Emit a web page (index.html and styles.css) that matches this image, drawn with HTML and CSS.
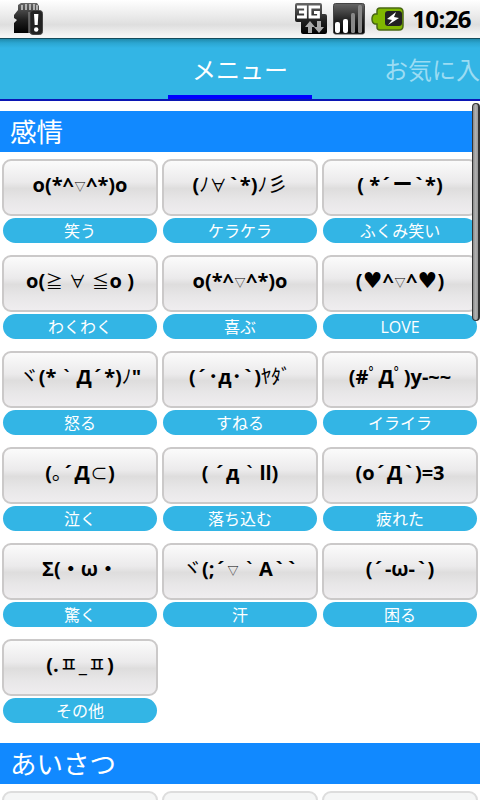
FILE: index.html
```html
<!DOCTYPE html>
<html lang="ja">
<head>
<meta charset="utf-8">
<title>メニュー</title>
<link rel="stylesheet" href="styles.css">
</head>
<body>
<div class="screen">
<header class="status">
<svg class="sd" width="30" height="33" viewBox="0 0 30 33"><defs><linearGradient id="g" x2="0" y2="1"><stop stop-color="#666"/><stop offset=".55" stop-color="#222"/><stop offset="1" stop-color="#000"/></linearGradient></defs><path d="M7 0h16l2 3v27H0V20l3-3-3-2v-3l4-5V2z" fill="url(#g)"/><path d="M8 2v5M12 1v6M16 1v6M20 1v6M23 2v5" stroke="#bbb" stroke-width="1.800"/><rect x="16" y="7.500" width="12.500" height="24" rx="3" fill="#222" stroke="#444"/><path d="M15 9v21" stroke="#999"/><path d="M20 11h4.400l-.7 11h-3z" fill="#fff"/><circle cx="22.200" cy="26.500" r="2.200" fill="#fff"/></svg>
<svg class="net" width="32" height="32" viewBox="0 0 32 32"><path d="M2 0h23q2 0 2 2v9h3q2 0 2 2v16q0 2-2 2H8q-2 0-2-2V19H2q-2 0-2-2V2q0-2 2-2z" fill="url(#g)"/><path d="M2 4h8.500v10H2M4 9h6M25 4H15v10h8.500V9.500H19" fill="none" stroke="#fff" stroke-width="2.800"/><path d="m15 18 5 6h-3v6h-4v-6h-3zM22 18h4v6h3l-5 6-5-6h3z" fill="#aaa"/></svg>
<svg class="signal" width="32" height="32" viewBox="0 0 32 32"><rect x=".5" y=".5" width="31" height="30.500" rx="2" fill="url(#g)" stroke="#444"/><g fill="#fff"><rect x="2" y="19" width="5" height="11" rx="2"/><rect x="10" y="16" width="5" height="14" rx="2"/></g><g fill="#888"><rect x="18" y="10" width="4" height="20" rx="1.500"/><rect x="25" y="2" width="4" height="28" rx="1.500"/></g></svg>
<svg class="battery" width="33" height="24" viewBox="0 0 33 24"><path d="M9 1h19q4 0 4 4v14q0 4-4 4H9q-3 0-3-3v-3H4q-3-1-3-5t3-5h2V4q0-3 3-3z" fill="#80b800" stroke="#496813" stroke-width="1.500"/><path d="M17 4h11q3 0 3 3v9q0 3-3 3H17q-3 0-3-3V7q0-3 3-3z" fill="#222"/><path d="m25 5-9 7 5 1-4 5 11-7-5-1z" fill="#fff"/></svg>
<span class="clock">10:26</span>
</header>
<nav class="tabs"><span class="tab-gap"></span><span class="tab current">メニュー</span><span class="tab next">お気に入</span></nav>
<main class="content">
<h2 class="heading">感情</h2>
<section class="grid">
<div class="cell"><div class="face"><span>o(*^<i class="tri">▽</i>^*)o</span></div><div class="label">笑う</div></div>
<div class="cell"><div class="face"><span>(<i class="half">ﾉ</i><i class="math">∀</i><u>`</u>*)<i class="half">ﾉ</i><i>彡</i></span></div><div class="label">ケラケラ</div></div>
<div class="cell"><div class="face"><span>( *<u>´</u><b>ー</b><u>`</u>*)</span></div><div class="label">ふくみ笑い</div></div>
<div class="cell"><div class="face"><span>o(<i class="math">≧</i> <i class="math">∀</i> <i class="math">≦</i>o )</span></div><div class="label">わくわく</div></div>
<div class="cell"><div class="face"><span>o(*^<i class="tri">▽</i>^*)o</span></div><div class="label">喜ぶ</div></div>
<div class="cell"><div class="face"><span>(<i class="heart">♥</i>^<i class="tri">▽</i>^<i class="heart">♥</i>)</span></div><div class="label">LOVE</div></div>
<div class="cell"><div class="face"><span><i>ヾ</i>(*<i class="grave">`</i>Д<u>´</u>*)<i class="half">ﾉ</i>"</span></div><div class="label">怒る</div></div>
<div class="cell"><div class="face"><span>(<u>´</u>･д･<u>`</u>)<i class="half">ﾔ</i><i class="half">ﾀ</i><i class="half">ﾞ</i></span></div><div class="label">すねる</div></div>
<div class="cell"><div class="face"><span>(#<i class="half">ﾟ</i>Д<i class="half">ﾟ</i>)y-~~</span></div><div class="label">イライラ</div></div>
<div class="cell"><div class="face"><span>(<i class="half">｡</i><u>´</u>Д<i class="math">⊂</i>)</span></div><div class="label">泣く</div></div>
<div class="cell"><div class="face"><span>( <u>´</u>д<i class="grave">`</i>ll)</span></div><div class="label">落ち込む</div></div>
<div class="cell"><div class="face"><span>(o<u>´</u>Д<u>`</u>)=3</span></div><div class="label">疲れた</div></div>
<div class="cell"><div class="face"><span>Σ(<b>・</b>ω<b>・</b></span></div><div class="label">驚く</div></div>
<div class="cell"><div class="face"><span><i>ヾ</i>(;<u>´</u><i class="tri">▽</i><i class="grave">`</i>A<u>`</u><u>`</u></span></div><div class="label">汗</div></div>
<div class="cell"><div class="face"><span>(<u>´</u>-ω-<u>`</u>)</span></div><div class="label">困る</div></div>
<div class="cell"><div class="face"><span>(.<i>ㅍ</i>_<i>ㅍ</i>)</span></div><div class="label">その他</div></div>
</section>
<h2 class="heading">あいさつ</h2>
<section class="grid"><div class="cell"><div class="face faded"></div></div><div class="cell"><div class="face faded"></div></div><div class="cell"><div class="face faded"></div></div></section>
<div class="scrollbar"></div>
</main>
</div>
</body>
</html>
```
FILE: styles.css
```css
* { box-sizing: border-box; }
body { margin: 0; background: #fff; font-family: "Open Sans", "Noto Sans CJK JP", sans-serif; }
.screen { width: 480px; height: 800px; overflow: hidden; }
.status { height: 39px; display: flex; align-items: flex-start; padding: 3px 9px 0 14px; background: linear-gradient(#fff 0%, #e9e9e9 45%, #dedede 65%, #f5f5f5 95%); border-bottom: 1px solid #144b5c; }
.net { margin-left: 251px; }
.signal { margin-left: 6px; }
.battery { margin: 4px 0 0 6px; }
.clock { margin-left: auto; font: bold 24px/32px "Open Sans", sans-serif; letter-spacing: -.6px; }
.tabs { height: 62px; display: flex; overflow: hidden; background: linear-gradient(#218aab, #2ba6d1 4px, #33b5e5 9px); border-bottom: 2px solid #0b16b4; color: #fff; font-size: 24px; line-height: 62px; white-space: nowrap; }
.tab-gap { flex: 0 0 168px; }
.tab { flex: 0 0 144px; height: 60px; text-align: center; }
.current { border-bottom: 4px solid #00f; }
.next { flex-basis: 96px; margin-left: 72px; text-align: left; color: #9bdcf3; }
.content { position: relative; padding-top: 10px; }
.heading { margin: 0; height: 41px; padding-left: 10px; background: #1189ff; color: #fff; font-size: 26.5px; font-weight: 400; line-height: 43px; }
.grid { display: grid; grid-template-columns: repeat(3, 160px); grid-auto-rows: 96px; padding: 7px 0 8px; }
.cell { padding: 0 2px; }
.face { height: 57px; border: 2px solid #cbc9c9; border-radius: 9px; background: linear-gradient(#fbfbfb, #ebeaeb 40%, #dedddd 52%, #e8e7e8 75%, #efedef); display: flex; justify-content: center; font-size: 20px; font-weight: 700; line-height: 47px; white-space: pre; color: #000; }
.face i, .face b { display: inline-block; width: 20px; line-height: 1; text-align: center; font-family: "Noto Sans CJK JP", sans-serif; font-style: normal; font-weight: 400; }
.face b { font-weight: 700; }
.face u { display: inline-block; width: 12.5px; line-height: 1; text-align: center; text-decoration: none; }
.face .half { width: 10px; }
.face .math { width: 18px; font-size: 17px; }
.face .grave { font-family: "Open Sans", sans-serif; font-weight: 600; }
.face .tri { width: 12px; font-size: 11px; vertical-align: 1px; }
.face .heart { width: 20px; font-size: 22px; font-family: "DejaVu Sans", sans-serif; }
.faded { border-color: #ddd; background: #f5f6f6; }
.label { height: 25px; margin: 2px 1px 0; border-radius: 13px; background: #33b5e5; color: #fff; font-size: 16px; line-height: 26px; text-align: center; }
.scrollbar { position: absolute; left: 472px; top: 2px; width: 8px; height: 218px; border: 1px solid #333; border-right-width: 2px; border-radius: 4px; background: linear-gradient(90deg, #888, #b0b0b0, #999); }
```
